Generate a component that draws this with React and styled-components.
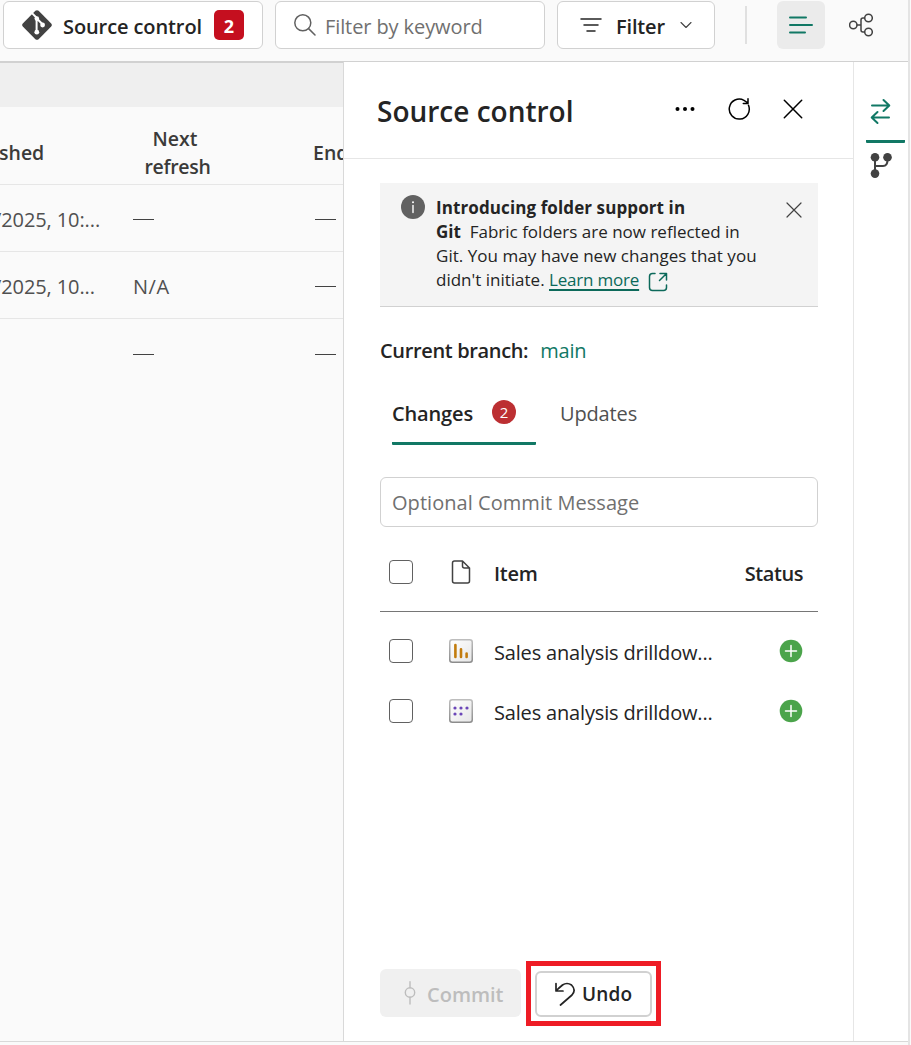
import React from "react";
import styled, { createGlobalStyle } from "styled-components";

const GlobalStyle = createGlobalStyle`
  * { box-sizing: border-box; }
  body { margin: 0; background: #fafafa; font-family: "Open Sans", "Noto Sans", sans-serif; color: #242424; }
  button { font-family: inherit; color: inherit; }
  svg { display: block; flex: none; }
`;

const Text = styled.span`
  font-size: ${(p) => p.$size || 20}px;
  font-weight: ${(p) => p.$weight || 400};
  letter-spacing: ${(p) => p.$track || 0}px;
  color: ${(p) => p.$color || "#242424"};
  margin-top: ${(p) => p.$drop || 0}px;
  margin-left: ${(p) => p.$gap || 0}px;
  line-height: 28px;
  white-space: nowrap;
`;

const Page = styled.div`
  width: 911px;
  height: 1045px;
  overflow: hidden;
  display: flex;
`;
const Window = styled.div`
  width: 910px;
  height: 1045px;
  border-right: 2px solid #e4e4e4;
  display: flex;
  flex-direction: column;
`;
const Toolbar = styled.header`
  flex: none;
  height: 62px;
  padding: 1px 0 0 3px;
  border-bottom: 1px solid #d1d1d1;
  display: flex;
  align-items: flex-start;
`;
const ToolButton = styled.button`
  width: ${(p) => p.$width}px;
  height: 48px;
  margin: 0 12px 0 0;
  padding: 0 0 0 ${(p) => p.$pad}px;
  border: 1px solid #d1d1d1;
  border-radius: 6px;
  background: #fff;
  display: flex;
  align-items: center;
`;
const SearchBox = styled(ToolButton).attrs({ as: "div" })``;
const CountBadge = styled.span`
  width: 30px;
  height: 30px;
  margin-left: 12px;
  border-radius: 5px;
  background: #c50f1f;
  display: flex;
  align-items: center;
  justify-content: center;
`;
const Chevron = styled.span`
  margin-left: 15px;
`;
const Divider = styled.span`
  width: 2px;
  height: 38px;
  margin: 5px 30px 0 18px;
  background: #e0e0e0;
`;
const ViewToggle = styled.button`
  width: 48px;
  height: 48px;
  margin-right: 12px;
  padding: 0;
  border: 0;
  border-radius: 6px;
  background: ${(p) => (p.$active ? "#ebebeb" : "transparent")};
  display: flex;
  align-items: center;
  justify-content: center;
`;

const Main = styled.div`
  flex: none;
  height: 980px;
  display: flex;
  border-bottom: 1px solid #d9d9d9;
`;
const Listing = styled.section`
  width: 344px;
  border-right: 1px solid #d9d9d9;
  overflow: hidden;
`;
const Band = styled.div`
  height: 45px;
  border-top: 1px solid #d1d1d1;
  background: #efefef;
`;
const ListRow = styled.div`
  height: ${(p) => p.$height || 67}px;
  border-bottom: ${(p) => (p.$last ? 0 : 1)}px solid #e6e6e6;
  display: grid;
  grid-template-columns: 133px 180px 1fr;
  align-items: center;
  overflow: hidden;
  padding-top: ${(p) => p.$drop || 3}px;
`;
const EdgeCell = styled.div`
  display: flex;
  margin-left: ${(p) => p.$shift}px;
`;
const TwoLine = styled.div`
  width: 89px;
  display: flex;
  flex-direction: column;
  align-items: center;
`;
const FirstWord = styled(Text)`
  margin-right: 5px;
`;
const Dash = styled.span`
  display: block;
  width: 21px;
  height: 1px;
  background: #424242;
`;

const Panel = styled.section`
  width: 509px;
  background: #fff;
  display: flex;
  flex-direction: column;
`;
const PanelHeader = styled.div`
  height: 97px;
  border-bottom: 1px solid #e6e6e6;
  padding: 0 48px 0 33px;
  display: flex;
  align-items: center;
  justify-content: space-between;
`;
const HeaderActions = styled.div`
  display: flex;
  gap: 30px;
  margin-top: -3px;
`;
const PanelBody = styled.div`
  flex: 1;
  padding: 24px 35px 0 36px;
  display: flex;
  flex-direction: column;
`;
const Notice = styled.div`
  height: 124px;
  background: #f4f4f4;
  border-bottom: 1px solid #d1d1d1;
  display: flex;
  align-items: flex-start;
  padding: 12px 16px 0 21px;
`;
const NoticeCopy = styled.p`
  margin: 1px 0 0 11px;
  width: 330px;
  flex: none;
  font-size: 17px;
  line-height: 24px;
  white-space: nowrap;
`;
const Line = styled.span`
  display: block;
  letter-spacing: ${(p) => p.$track || 0}px;
`;
const Strong = styled.b`
  font-weight: 700;
  letter-spacing: ${(p) => p.$track || 0}px;
`;
const Link = styled.a`
  color: #0c695a;
  letter-spacing: ${(p) => p.$track || 0}px;
  text-decoration: underline;
  text-decoration-thickness: 2px;
  text-underline-offset: 3px;
`;
const LinkIcon = styled.span`
  display: inline-block;
  vertical-align: -6px;
  margin-left: 9px;
`;
const NoticeClose = styled.div`
  margin: 7px 0 0 auto;
`;
const Branch = styled.div`
  display: flex;
  gap: 12px;
  margin-top: 30px;
`;
const Tabs = styled.div`
  display: flex;
  gap: 24px;
  margin: 35px 0 0 12px;
`;
const Tab = styled.div`
  height: 45px;
  width: ${(p) => (p.$active ? "144px" : "auto")};
  display: flex;
  border-bottom: ${(p) => (p.$active ? "3px solid #117865" : "0")};
  border-radius: 1px;
`;
const RoundBadge = styled.span`
  width: 24px;
  height: 24px;
  margin: 0 20px 0 auto;
  border-radius: 50%;
  background: #bc2f32;
  display: flex;
  align-items: center;
  justify-content: center;
`;
const MessageInput = styled.div`
  height: 50px;
  margin-top: 32px;
  border: 1px solid #d1d1d1;
  border-radius: 6px;
  padding: 0 11px;
  display: flex;
  align-items: center;
`;
const ItemRow = styled.div`
  height: 60px;
  display: grid;
  grid-template-columns: 57px 48px 1fr auto;
  align-items: center;
  padding: 0 15px 0 9px;
`;
const ItemHead = styled(ItemRow)`
  height: 85px;
  padding-top: 6px;
  margin-bottom: 9px;
  border-bottom: 1px solid #767676;
`;
const Check = styled.span`
  width: 24px;
  height: 24px;
  border: 1px solid #616161;
  border-radius: 4px;
`;
const IconCell = styled.div`
  width: 30px;
  display: flex;
  justify-content: center;
`;
const Footer = styled.div`
  display: flex;
  align-items: flex-start;
  gap: 5px;
  margin: auto 0 15px;
`;
const ActionButton = styled.button`
  height: ${(p) => (p.$disabled ? 48 : 46)}px;
  width: ${(p) => (p.$disabled ? 141 : 117)}px;
  margin-top: ${(p) => (p.$disabled ? 8 : 0)}px;
  border: ${(p) => (p.$disabled ? "0" : "2px solid #d1d1d1")};
  border-radius: 6px;
  background: ${(p) => (p.$disabled ? "#f0f0f0" : "#fff")};
  padding: 0 0 0 ${(p) => (p.$disabled ? 21 : 17)}px;
  display: flex;
  align-items: center;
`;
const Highlight = styled.div`
  width: 135px;
  height: 65px;
  border: 5px solid #ee1c25;
  display: flex;
  align-items: center;
  padding-left: 4px;
`;

const Rail = styled.aside`
  width: 55px;
  border-left: 1px solid #e6e6e6;
  background: #fff;
  padding-left: 12px;
`;
const RailItem = styled.div`
  height: ${(p) => (p.$active ? 81 : 44)}px;
  width: 39px;
  padding: ${(p) => (p.$active ? "35px 0 0 1px" : "7px 0 0 1px")};
  border-bottom: ${(p) => (p.$active ? "3px solid #117865" : "0")};
  border-radius: 1px;
`;

const Svg = ({ w, h = w, sw = 1.5, color = "#242424", children }) => (
  <svg width={w} height={h} viewBox={`0 0 ${w} ${h}`} fill="none" stroke={color} strokeWidth={sw} strokeLinecap="round" strokeLinejoin="round">
    {children}
  </svg>
);

const GitLogo = () => (
  <Svg w={30} sw={0}>
    <path d="M13.4 .8Q15 -.5 16.6 .8L29.2 13.4Q30.5 15 29.2 16.6L16.6 29.2Q15 30.5 13.4 29.2L.8 16.6Q-.5 15 .8 13.4Z" fill="#424242" />
    <path d="M10.5 3.6L14.6 7.8V22.4M15.3 9L20.3 14" stroke="#fff" strokeWidth="2" />
    <g fill="#fff"><circle cx="14.8" cy="8.6" r="2.3" /><circle cx="14.8" cy="22.2" r="2.4" /><circle cx="20.6" cy="15" r="2.4" /></g>
  </Svg>
);
const Cross = ({ size, color, sw }) => (
  <Svg w={size} color={color} sw={sw}><path d={`M1 1L${size - 1} ${size - 1}M${size - 1} 1L1 ${size - 1}`} /></Svg>
);
const FileTile = ({ kind }) => (
  <Svg w={24} sw={0}>
    <defs>
      <linearGradient id={"f" + kind} x1="0" y1="0" x2="1" y2="1"><stop stopColor="#fff" /><stop offset="1" stopColor="#e6e6e6" /></linearGradient>
      <linearGradient id={"s" + kind} x1="0" y1="0" x2="0" y2="1"><stop stopColor="#bdbdbd" /><stop offset="1" stopColor="#8c8c8c" /></linearGradient>
    </defs>
    <rect x=".75" y=".75" width="22.5" height="22.5" rx="2.5" fill={`url(#f${kind})`} stroke={`url(#s${kind})`} strokeWidth="1.5" />
    {kind === "report" ? (
      <path d="M6.4 6V18M12 10.3V18M17.6 14.6V18" stroke="#c27c0e" strokeWidth="2.6" />
    ) : (
      <g fill="#6b46b8"><circle cx="6" cy="9" r="1.6" /><circle cx="12" cy="9" r="1.6" /><circle cx="18" cy="9" r="1.6" /><circle cx="6" cy="15" r="1.6" /><circle cx="12" cy="15" r="1.6" /></g>
    )}
  </Svg>
);
const Added = () => (
  <Svg w={24} sw={0}>
    <circle cx="12" cy="12" r="11.3" fill="#4ba44b" />
    <path d="M12 6.5V17.5M6.5 12H17.5" stroke="#fff" strokeWidth="1.5" />
  </Svg>
);

const items = ["report", "model"];

export default function App() {
  return (
    <Page>
      <GlobalStyle />
      <Window>
        <Toolbar>
          <ToolButton $width={260} $pad={18}>
            <GitLogo />
            <Text $weight={600} $track={-0.1} $gap={11} $drop={3}>Source control</Text>
            <CountBadge><Text $weight={700} $size={18} $color="#fff" $drop={2}>2</Text></CountBadge>
          </ToolButton>
          <SearchBox $width={270} $pad={18}>
            <Svg w={22} color="#616161"><circle cx="8.8" cy="8.8" r="8" /><path d="M14.6 14.6L21 21" /></Svg>
            <Text $color="#707070" $gap={9} $drop={3} $track={-0.1}>Filter by keyword</Text>
          </SearchBox>
          <ToolButton $width={158} $pad={22}>
            <Svg w={22} h={16} color="#242424"><path d="M1 2H21M4 8H18M7 14H15" /></Svg>
            <Text $weight={600} $gap={14} $drop={3} $track={-0.15}>Filter</Text>
            <Chevron><Svg w={12} h={8} sw={1.1} color="#424242"><path d="M1 1.5L6 6.5L11 1.5" /></Svg></Chevron>
          </ToolButton>
          <Divider />
          <ViewToggle $active>
            <Svg w={24} h={18} sw={2} color="#117865"><path d="M1 1.5H17M1 9H23M1 16.5H16" /></Svg>
          </ViewToggle>
          <ViewToggle>
            <Svg w={24} color="#424242"><circle cx="4.3" cy="12" r="3.7" /><circle cx="19.5" cy="5" r="3.8" /><circle cx="19.5" cy="19" r="3.8" /><path d="M8 12H12M15.5 5H14Q12 5 12 7V17Q12 19 14 19H15.5" /></Svg>
          </ViewToggle>
        </Toolbar>
        <Main>
          <Listing>
            <Band />
            <ListRow $height={78} $drop={15}>
              <EdgeCell $shift={-1}><Text $weight={600} $size={19.5} $color="#3b3a39">shed</Text></EdgeCell>
              <TwoLine><FirstWord $weight={600} $size={19.5} $color="#3b3a39">Next</FirstWord><Text $weight={600} $size={19.5} $track={-0.3} $color="#3b3a39">refresh</Text></TwoLine>
              <Text $weight={600} $size={19.5} $color="#3b3a39">End</Text>
            </ListRow>
            <ListRow>
              <EdgeCell $shift={-6}><Text $track={-0.1} $color="#505050">/2025, 10:...</Text></EdgeCell><Dash /><EdgeCell $shift={2}><Dash /></EdgeCell>
            </ListRow>
            <ListRow>
              <EdgeCell $shift={-6}><Text $track={-0.1} $color="#505050">/2025, 10...</Text></EdgeCell><Text $track={0.5} $color="#505050">N/A</Text><EdgeCell $shift={2}><Dash /></EdgeCell>
            </ListRow>
            <ListRow $last>
              <span /><Dash /><EdgeCell $shift={2}><Dash /></EdgeCell>
            </ListRow>
          </Listing>
          <Panel>
            <PanelHeader>
              <Text $weight={600} $size={28} $drop={2}>Source control</Text>
              <HeaderActions>
                <Svg w={24} sw={0}><g fill="#000"><circle cx="4.5" cy="12" r="2" /><circle cx="12" cy="12" r="2" /><circle cx="19.5" cy="12" r="2" /></g></Svg>
                <Svg w={24} color="#000"><path d="M21.5 8.3A10 10 0 1 1 17 3.3L21 6M21 1.8V6.5H16.3" /></Svg>
                <Svg w={24} color="#000"><path d="M3.3 3.3L20.7 20.7M20.7 3.3L3.3 20.7" /></Svg>
              </HeaderActions>
            </PanelHeader>
            <PanelBody>
              <Notice>
                <Svg w={24} sw={0}><circle cx="12" cy="12" r="12" fill="#616161" /><circle cx="12" cy="7.2" r="1" fill="#fff" /><path d="M12 10.5V17.5" stroke="#fff" strokeWidth="1.4" /></Svg>
                <NoticeCopy>
                  <Line><Strong $track={0.1}>Introducing folder support in</Strong></Line>
                  <Line><Strong>Git</Strong>&nbsp; Fabric folders are now reflected in</Line>
                  <Line $track={0.03}>Git. You may have new changes that you</Line>
                  <Line>didn't initiate. <Link $track={-0.2}>Learn more</Link>
                    <LinkIcon><Svg w={20} color="#0c695a"><path d="M7 1.5H4.5Q1.5 1.5 1.5 4.5V15.5Q1.5 18.5 4.5 18.5H15.5Q18.5 18.5 18.5 15.5V13M12 1.5H18.5V8M18 2L11.5 8.5" /></Svg></LinkIcon>
                  </Line>
                </NoticeCopy>
                <NoticeClose><Cross size={16} color="#424242" sw={1.2} /></NoticeClose>
              </Notice>
              <Branch><Text $weight={600} $track={-0.35}>Current branch:</Text><Text $color="#117865" $track={-0.2}>main</Text></Branch>
              <Tabs>
                <Tab $active><Text $weight={600} $track={-0.15}>Changes</Text><RoundBadge><Text $size={15} $color="#fff">2</Text></RoundBadge></Tab>
                <Tab><Text $color="#505050" $track={-0.15}>Updates</Text></Tab>
              </Tabs>
              <MessageInput><Text $color="#707070" $track={0.05} $drop={2}>Optional Commit Message</Text></MessageInput>
              <ItemHead>
                <Check />
                <IconCell><Svg w={20} h={24} color="#424242"><path d="M3.5 1H11.5L18.5 8V21Q18.5 23 16.5 23H3.5Q1.5 23 1.5 21V3Q1.5 1 3.5 1ZM11.5 1V6Q11.5 8 13.5 8H18.5" /></Svg></IconCell>
                <Text $weight={600} $track={-0.3} $drop={3}>Item</Text>
                <Text $weight={600} $track={-0.45} $drop={3}>Status</Text>
              </ItemHead>
              {items.map((kind) => (
                <ItemRow key={kind}>
                  <Check />
                  <IconCell><FileTile kind={kind} /></IconCell>
                  <Text $track={-0.17} $drop={3}>Sales analysis drilldow...</Text>
                  <Added />
                </ItemRow>
              ))}
              <Footer>
                <ActionButton $disabled>
                  <Svg w={18} h={24} sw={1.4} color="#bdbdbd"><circle cx="9" cy="11.5" r="4.7" /><path d="M9 .8V6.8M9 16.2V23" /></Svg>
                  <Text $weight={600} $color="#bdbdbd" $gap={8} $drop={3}>Commit</Text>
                </ActionButton>
                <Highlight>
                  <ActionButton>
                    <Svg w={22} h={24} sw={1.7}><path d="M2 1.5V9H9M2.3 8.5Q5.5 5.5 8.5 3Q13 0 17.5 3Q22.5 8 18 13L6.5 23" /></Svg>
                    <Text $weight={600} $size={19} $gap={6} $track={0.2}>Undo</Text>
                  </ActionButton>
                </Highlight>
              </Footer>
            </PanelBody>
          </Panel>
          <Rail>
            <RailItem $active>
              <Svg w={28} color="#117865" sw={2}><path d="M5 8.5H22M16.5 3L22.3 8.5L16.5 14M22 20.5H5M10.5 15L4.7 20.5L10.5 26" /></Svg>
            </RailItem>
            <RailItem>
              <Svg w={28} color="#424242" sw={2}><g fill="#424242" strokeWidth="0"><circle cx="8" cy="7.3" r="4.3" /><circle cx="20.5" cy="7.3" r="4.3" /><circle cx="8" cy="23.6" r="4.3" /></g><path d="M8 8V22M8 16H16Q20.5 16 20.5 10" /></Svg>
            </RailItem>
          </Rail>
        </Main>
      </Window>
    </Page>
  );
}
